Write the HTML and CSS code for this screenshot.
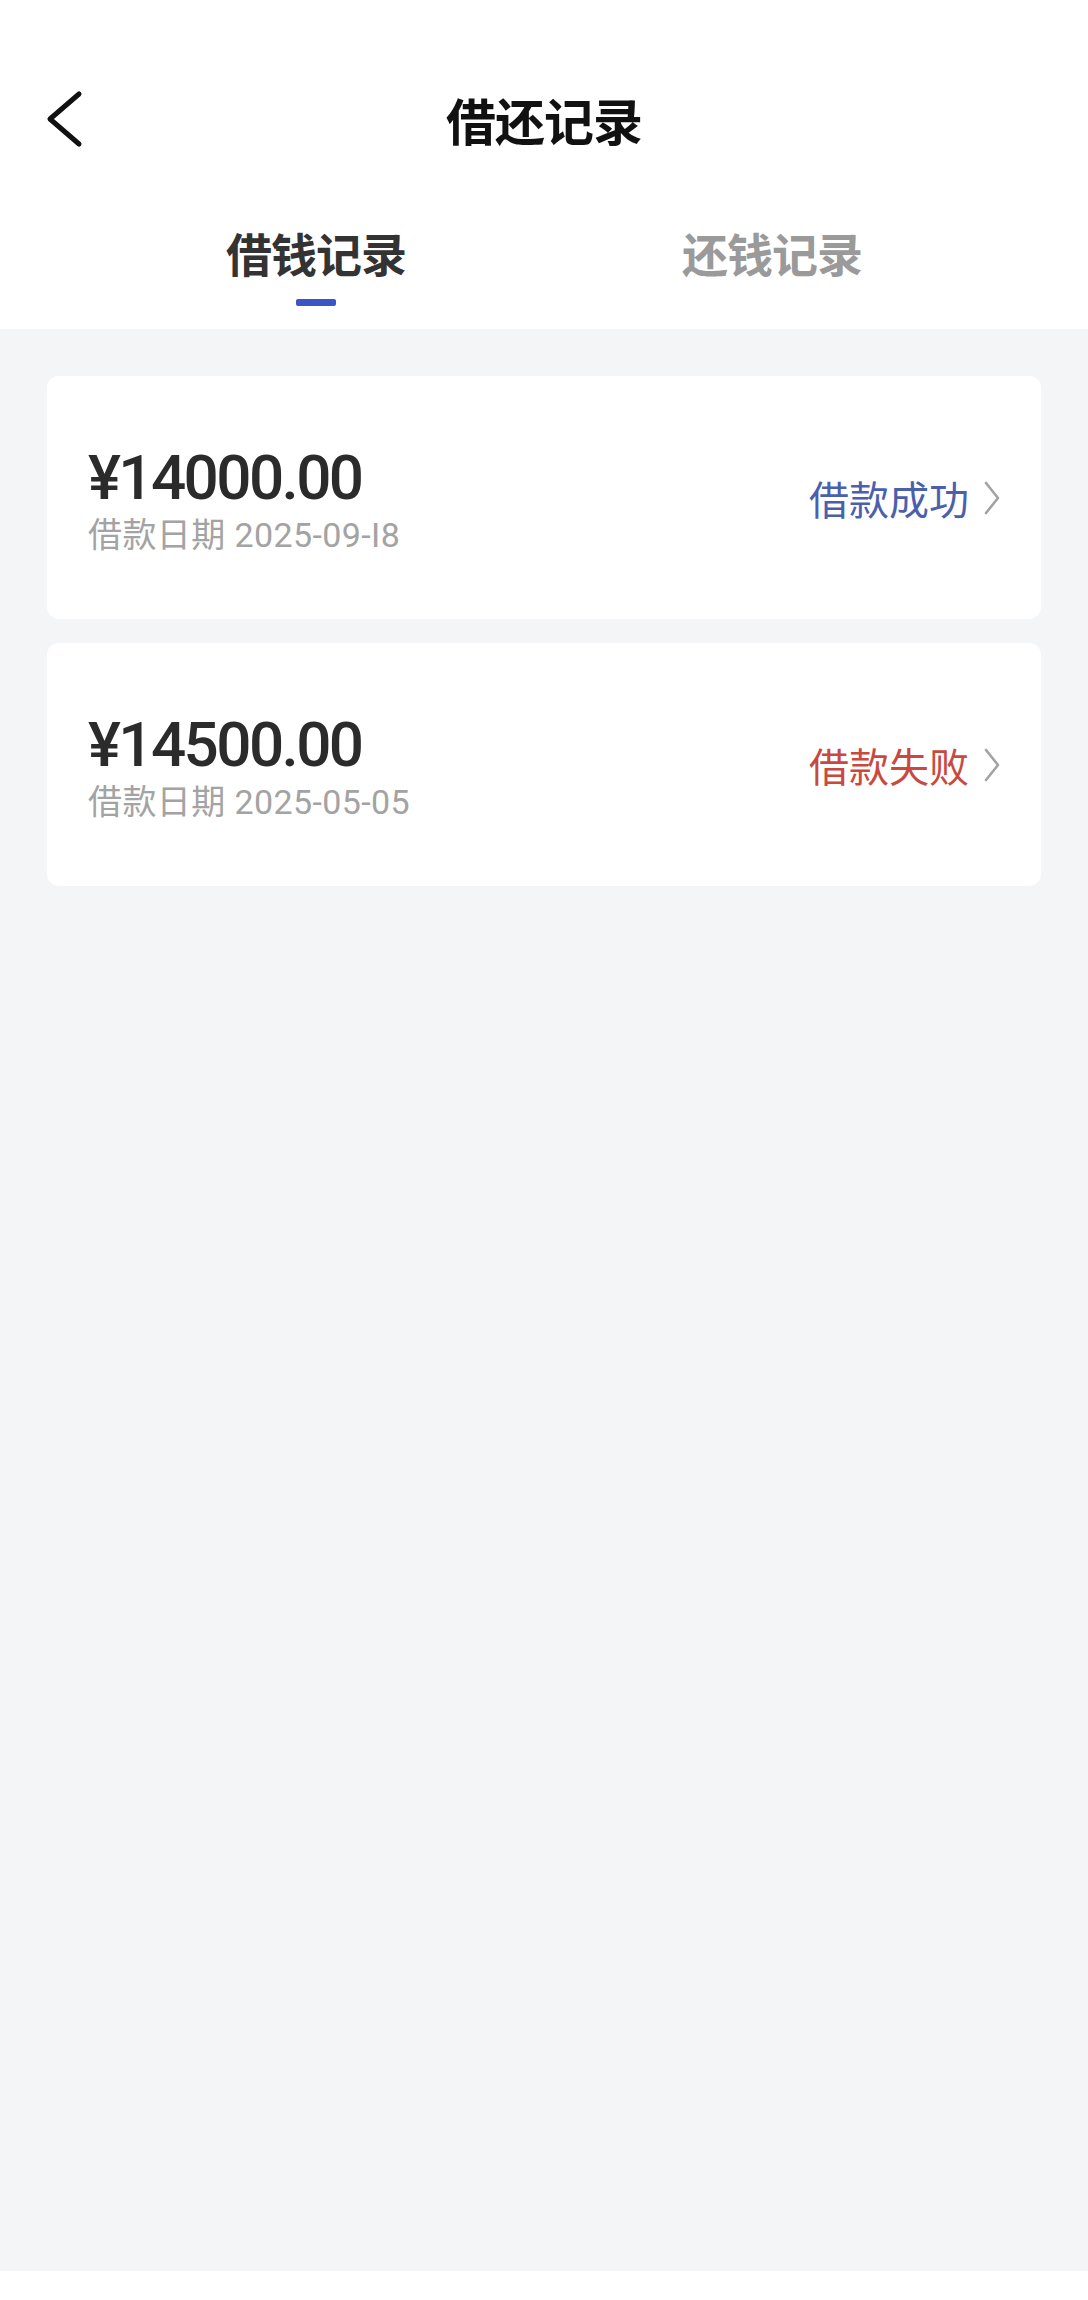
FILE: index.html
```html
<!DOCTYPE html>
<html lang="zh-CN">
<head>
<meta charset="utf-8">
<title>借还记录</title>
<link rel="stylesheet" href="styles.css">
</head>
<body>
<div class="page">
  <header class="header">
    <div class="nav">
      <div class="nav-left">
        <svg class="back" width="40" height="60" viewBox="0 0 40 60" fill="none">
          <path d="M35 5 L6 30 L35 55" stroke="#111" stroke-width="5" stroke-linecap="round" stroke-linejoin="round"/>
        </svg>
      </div>
      <h1 class="title">借还记录</h1>
      <div class="nav-right"></div>
    </div>
    <div class="tabs">
      <div class="tab tab-active">
        <span class="tab-text">借钱记录</span>
        <span class="tab-bar"></span>
      </div>
      <div class="tab">
        <span class="tab-text">还钱记录</span>
        <span class="tab-bar tab-bar-hidden"></span>
      </div>
    </div>
  </header>
  <main class="content">
    <div class="card">
      <div class="card-info">
        <div class="amount">¥14000.00</div>
        <div class="date">借款日期 2025-09-I8</div>
      </div>
      <div class="card-status status-success">
        <span>借款成功</span>
        <svg class="chev" width="18" height="34" viewBox="0 0 18 34" fill="none">
          <path d="M3 2 L15 17 L3 32" stroke="#a3a3a3" stroke-width="2.6" stroke-linecap="round" stroke-linejoin="round"/>
        </svg>
      </div>
    </div>
    <div class="card">
      <div class="card-info">
        <div class="amount">¥14500.00</div>
        <div class="date">借款日期 2025-05-05</div>
      </div>
      <div class="card-status status-fail">
        <span>借款失败</span>
        <svg class="chev" width="18" height="34" viewBox="0 0 18 34" fill="none">
          <path d="M3 2 L15 17 L3 32" stroke="#a3a3a3" stroke-width="2.6" stroke-linecap="round" stroke-linejoin="round"/>
        </svg>
      </div>
    </div>
  </main>
  <div class="footer-space"></div>
</div>
</body>
</html>
```
FILE: styles.css
```css
* { box-sizing: border-box; }
html, body {
  margin: 0;
  padding: 0;
  background: #ffffff;
}
body {
  font-family: Roboto, "Noto Sans CJK SC", sans-serif;
  width: 1088px;
}
.page {
  display: flex;
  flex-direction: column;
  height: 2300px;
}
.header {
  background: #ffffff;
  height: 329px;
  padding-top: 59px;
  display: flex;
  flex-direction: column;
}
.nav {
  height: 120px;
  display: grid;
  grid-template-columns: 1fr auto 1fr;
  align-items: center;
}
.nav-left {
  padding-left: 44px;
  display: flex;
  align-items: center;
}
.back { display: block; }
.title {
  margin: 0;
  font-family: "Noto Sans CJK SC", sans-serif;
  font-size: 50px;
  font-weight: 700;
  color: #111111;
  line-height: 60px;
  letter-spacing: -1px;
}
.tabs {
  height: 150px;
  display: flex;
  justify-content: center;
}
.tab {
  width: 456px;
  display: flex;
  flex-direction: column;
  align-items: center;
  padding-top: 45px;
}
.tab-text {
  font-family: "Noto Sans CJK SC", sans-serif;
  font-size: 46px;
  font-weight: 700;
  line-height: 56px;
  color: #9a9a9a;
  letter-spacing: -1px;
}
.tab-active .tab-text { color: #333333; }
.tab-bar {
  margin-top: 19px;
  width: 40px;
  height: 7px;
  border-radius: 2px;
  background: #3c55c5;
}
.tab-bar-hidden { visibility: hidden; }
.content {
  background: #f4f5f7;
  height: 1942px;
  padding: 47px 47px;
  display: flex;
  flex-direction: column;
  gap: 24px;
}
.card {
  background: #ffffff;
  border-radius: 12px;
  height: 243px;
  padding: 0 40px 0 41px;
  display: flex;
  align-items: center;
  justify-content: space-between;
}
.card-info {
  display: flex;
  flex-direction: column;
  gap: 2px;
  padding-top: 2px;
}
.amount {
  font-family: Roboto, sans-serif;
  font-size: 62px;
  font-weight: 500;
  line-height: 70px;
  color: #2b2b2b;
  letter-spacing: -2.6px;
}
.date {
  font-family: Roboto, "Noto Sans CJK SC", sans-serif;
  font-size: 34px;
  line-height: 40px;
  color: #a3a3a3;
  letter-spacing: 0.4px;
}
.card-status {
  display: flex;
  align-items: center;
  gap: 14px;
  font-family: "Noto Sans CJK SC", sans-serif;
  font-size: 40px;
  line-height: 48px;
}
.status-success { color: #4b5fad; }
.status-fail { color: #c9493f; }
.chev { display: block; }
.footer-space {
  flex: 1;
  background: #ffffff;
}
```
